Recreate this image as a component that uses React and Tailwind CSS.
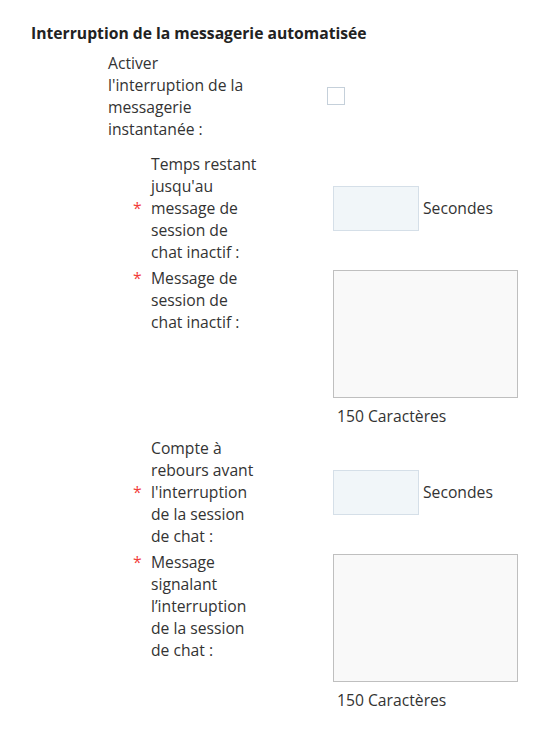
import React from 'react';

const Required = ({ children, top }) => (
    <div className={`w-[219px] flex pl-[25px] ${top ? 'items-start' : 'items-center'}`}>
        <span className="w-[18px] text-[#f23b3b]">*</span>
        <span className="w-[108px]">{children}</span>
    </div>
);

const SecondsField = () => (
    <div className="flex items-center pl-[6px]">
        <input type="text" className="w-[86px] h-[45px] bg-[#f1f6f9] border border-[#d5dfe8] outline-none" />
        <span className="ml-[4px]">Secondes</span>
    </div>
);

const MessageField = () => (
    <div className="pl-[6px] mt-[3px]">
        <textarea className="block w-[185px] h-[128px] bg-[#f9f9f9] border border-[#bfbfbf] resize-none outline-none" />
        <div className="mt-[7px] pl-[4px]">150 Caractères</div>
    </div>
);

export default function App() {
    return (
        <div className="min-h-screen bg-white font-['Open_Sans',sans-serif] text-[15.7px] leading-[22px] text-[#333]">
            <h2 className="pt-[22px] pl-[31px] font-bold text-[#222]">
                Interruption de la messagerie automatisée
            </h2>

            <div className="pl-[108px]">
                {/* Activer */}
                <div className="flex items-center mt-[8px]">
                    <div className="w-[219px]">
                        <span className="block w-[142px]">Activer l'interruption de la messagerie instantanée :</span>
                    </div>
                    <input type="checkbox" className="appearance-none w-[18px] h-[18px] border border-[#c5d0da] bg-white" />
                </div>

                {/* Temps restant */}
                <div className="flex items-center mt-[13px]">
                    <Required>Temps restant jusqu'au message de session de chat inactif :</Required>
                    <SecondsField />
                </div>

                {/* Message inactif */}
                <div className="flex items-start mt-[4px]">
                    <Required top>Message de session de chat inactif :</Required>
                    <MessageField />
                </div>

                {/* Compte à rebours */}
                <div className="flex items-center mt-[10px]">
                    <Required>Compte à rebours avant l'interruption de la session de chat :</Required>
                    <SecondsField />
                </div>

                {/* Message interruption */}
                <div className="flex items-start mt-[4px]">
                    <Required top>Message signalant l’interruption de la session de chat :</Required>
                    <MessageField />
                </div>
            </div>
        </div>
    );
}
